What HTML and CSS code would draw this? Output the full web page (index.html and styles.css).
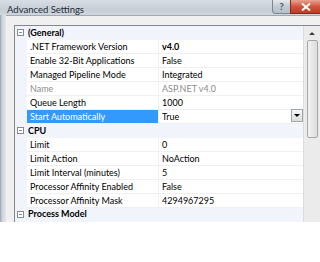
FILE: index.html
```html
<!DOCTYPE html>
<html lang="en">
<head>
    <meta charset="UTF-8">
    <title>Advanced Settings</title>
    <link rel="stylesheet" href="styles.css">
</head>
<body>
    <div class="window">
        <div class="titlebar">
            <span class="title">Advanced Settings</span>
            <div class="caption-buttons">
                <span class="btn-help">?</span>
                <span class="btn-close">
                    <svg width="10" height="8" viewBox="0 0 10 8"><path d="M1 0.5 L9 7.5 M9 0.5 L1 7.5" stroke="#fff" stroke-width="2"/></svg>
                </span>
            </div>
        </div>
        <div class="client">
            <div class="grid">
                <div class="rows">
                    <div class="row category"><span class="toggle"></span><span class="cat-name">(General)</span></div>
                    <div class="row"><span class="gutter"></span><span class="label">.NET Framework Version</span><span class="value bold">v4.0</span></div>
                    <div class="row"><span class="gutter"></span><span class="label">Enable 32-Bit Applications</span><span class="value">False</span></div>
                    <div class="row"><span class="gutter"></span><span class="label">Managed Pipeline Mode</span><span class="value">Integrated</span></div>
                    <div class="row readonly"><span class="gutter"></span><span class="label">Name</span><span class="value">ASP.NET v4.0</span></div>
                    <div class="row"><span class="gutter"></span><span class="label">Queue Length</span><span class="value">1000</span></div>
                    <div class="row selected"><span class="gutter"></span><span class="label">Start Automatically</span><span class="value">True<span class="dropdown"></span></span></div>
                    <div class="row category"><span class="toggle"></span><span class="cat-name">CPU</span></div>
                    <div class="row"><span class="gutter"></span><span class="label">Limit</span><span class="value">0</span></div>
                    <div class="row"><span class="gutter"></span><span class="label">Limit Action</span><span class="value">NoAction</span></div>
                    <div class="row"><span class="gutter"></span><span class="label">Limit Interval (minutes)</span><span class="value">5</span></div>
                    <div class="row"><span class="gutter"></span><span class="label">Processor Affinity Enabled</span><span class="value">False</span></div>
                    <div class="row"><span class="gutter"></span><span class="label">Processor Affinity Mask</span><span class="value">4294967295</span></div>
                    <div class="row category last"><span class="toggle"></span><span class="cat-name">Process Model</span></div>
                </div>
                <div class="scrollbar">
                    <div class="arrow-up"></div>
                    <div class="thumb"></div>
                </div>
            </div>
        </div>
    </div>
</body>
</html>
```

FILE: styles.css
```css
body {
    margin: 0;
    width: 320px;
    height: 262px;
    overflow: hidden;
    background: #fff;
    font-family: 'Lato', 'Liberation Sans', sans-serif;
    font-size: 9px;
    color: #000;
}
.window {
    height: 222px;
    display: flex;
    flex-direction: column;
    background: linear-gradient(90deg, #9aa3ad 0, #c9d0d8 2px, #dfe4ea 5px);
    overflow: hidden;
}
.titlebar {
    height: 21px;
    display: flex;
    align-items: flex-start;
    background: linear-gradient(180deg, #d9dee5, #c7ced7 60%, #cfd5dc);
}
.title {
    padding: 4px 0 0 7px;
    font-size: 9.5px;
    color: #1e2a38;
}
.caption-buttons {
    margin-left: auto;
    display: flex;
}
.btn-help {
    width: 18px;
    height: 14px;
    box-sizing: border-box;
    border: 1px solid #7c8591;
    border-top: none;
    border-right: none;
    border-radius: 0 0 0 4px;
    background: linear-gradient(180deg, #e6eaef, #c3cad3 50%, #b7bfc9);
    color: #4a5563;
    font-size: 10px;
    font-weight: bold;
    text-align: center;
    line-height: 12px;
}
.btn-close {
    width: 30px;
    height: 14px;
    box-sizing: border-box;
    border: 1px solid #7b2b20;
    border-top: none;
    border-right: none;
    background: linear-gradient(180deg, #e8a493, #d2543b 50%, #c13b22);
    display: flex;
    align-items: center;
    justify-content: center;
}
.client {
    flex: 1;
    margin-left: 6px;
    background: #f0f0f0;
    border-top: 1px solid #a0a8b2;
    padding: 9px 0 0 8px;
    display: flex;
}
.grid {
    flex: 1;
    display: flex;
    border: 1px solid #828790;
    border-bottom: none;
    border-right: none;
    background: #fff;
}
.rows {
    flex: 1;
}
.row {
    height: 14px;
    display: flex;
    align-items: center;
    box-sizing: border-box;
    border-bottom: 1px solid #f0f0f0;
    white-space: nowrap;
}
.category {
    background: #f1f4fa;
    font-weight: bold;
    border-bottom-color: #f1f4fa;
}
.last {
    align-items: flex-start;
}
.last .toggle {
    margin-top: 3px;
}
.toggle {
    width: 7px;
    height: 7px;
    margin-left: 2px;
    box-sizing: border-box;
    border: 1px solid #848b95;
    background: linear-gradient(#848b95, #848b95) center / 3px 1px no-repeat, #fff;
}
.cat-name {
    margin-left: 4px;
}
.gutter {
    width: 12px;
    height: 14px;
    background: #f1f4fa;
}
.label {
    width: 132px;
    padding-left: 3px;
    box-sizing: border-box;
    height: 13px;
    line-height: 13px;
    border-right: 1px solid #f0f0f0;
    overflow: hidden;
}
.value {
    flex: 1;
    padding-left: 3px;
    height: 13px;
    line-height: 13px;
    display: flex;
}
.bold {
    font-weight: bold;
}
.readonly {
    color: #8d8d8d;
}
.selected .label {
    background: #3399ff;
    color: #fff;
}
.dropdown {
    margin-left: auto;
    margin-top: -1px;
    width: 12px;
    height: 13px;
    box-sizing: border-box;
    border: 1px solid #a0a6ae;
    background: linear-gradient(180deg, #f7f7f7, #dcdcdc);
    position: relative;
}
.dropdown::after {
    content: '';
    position: absolute;
    left: 2px;
    top: 4px;
    border-left: 3px solid transparent;
    border-right: 3px solid transparent;
    border-top: 3px solid #000;
}
.scrollbar {
    width: 16px;
    background: #ebebeb;
    border-left: 1px solid #dcdcdc;
    display: flex;
    flex-direction: column;
    align-items: center;
}
.arrow-up {
    margin-top: 6px;
    border-left: 3px solid transparent;
    border-right: 3px solid transparent;
    border-bottom: 3px solid #3c3c3c;
}
.thumb {
    margin-top: 5px;
    width: 11px;
    height: 98px;
    box-sizing: border-box;
    border: 1px solid #a7a7a7;
    border-radius: 2px;
    background: linear-gradient(90deg, #f2f2f2, #dcdcdc);
}
```
